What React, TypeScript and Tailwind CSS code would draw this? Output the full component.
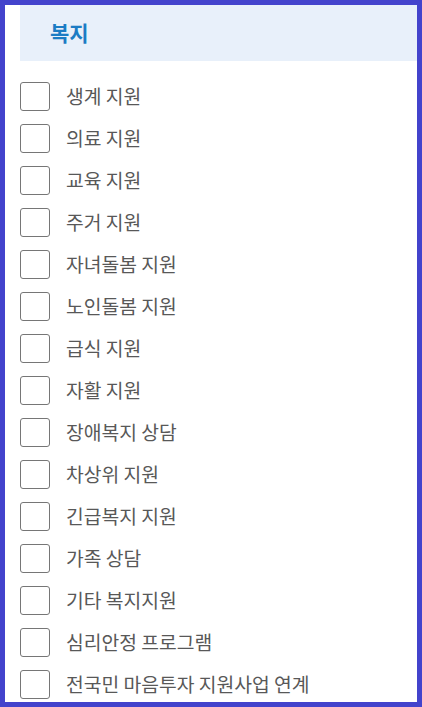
const items = [
  '생계 지원',
  '의료 지원',
  '교육 지원',
  '주거 지원',
  '자녀돌봄 지원',
  '노인돌봄 지원',
  '급식 지원',
  '자활 지원',
  '장애복지 상담',
  '차상위 지원',
  '긴급복지 지원',
  '가족 상담',
  '기타 복지지원',
  '심리안정 프로그램',
  '전국민 마음투자 지원사업 연계',
];

export default function App() {
  return (
    <div
      className="h-[707px] w-[422px] overflow-hidden border-[5px] border-[#4343cc] bg-white pl-[15px]"
      style={{ fontFamily: '"Noto Sans CJK KR", "Noto Sans", sans-serif' }}
    >
      <div className="flex h-[56px] items-center bg-[#e8f0fa] pl-[30px]">
        <h2 className="text-[21px] font-bold text-[#1b7cc4]">복지</h2>
      </div>

      <ul className="mt-[21px] flex flex-col gap-[13px]">
        {items.map(item => (
          <li key={item} className="flex h-[29px] items-center">
            <span className="h-[29px] w-[30px] shrink-0 rounded-[3px] border border-[#767676] bg-white" />
            <span className="ml-[16px] text-[19.3px] leading-none text-[#585858]">{item}</span>
          </li>
        ))}
      </ul>
    </div>
  );
}
